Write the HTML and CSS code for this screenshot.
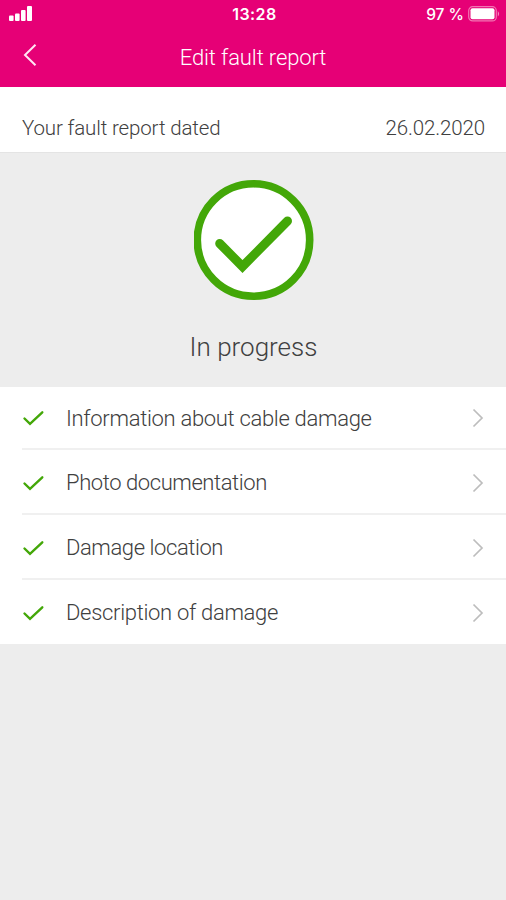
FILE: index.html
```html
<!DOCTYPE html>
<html lang="en">
<head>
<meta charset="utf-8">
<title>Edit fault report</title>
<link rel="stylesheet" href="styles.css">
</head>
<body>
<header class="header">
  <div class="status-bar">
    <svg class="signal" width="24" height="16" viewBox="0 0 24 16" fill="#fff"><rect x="0" y="9.500" width="4.600" height="5.500" rx="1"/><rect x="6" y="7.500" width="4.600" height="7.500" rx="1"/><rect x="12" y="4" width="4.600" height="11" rx="1"/><rect x="18" y="0" width="5" height="15" rx="1"/></svg>
    <span class="clock">13:28</span>
    <div class="battery"><span>97 %</span>
      <svg width="32" height="16" viewBox="0 0 32 16"><rect x=".7" y=".7" width="27.600" height="14.200" rx="4" fill="none" stroke="#f274b3" stroke-width="1.200"/><rect x="2.500" y="2.300" width="24" height="11" rx="2" fill="#fff"/><path d="M29.800 5q2.600 2.800 0 5.600z" fill="#f58abf"/></svg>
    </div>
  </div>
  <div class="nav-bar">
    <svg class="back" width="16" height="24" viewBox="0 0 16 24" fill="none" stroke="#ffe6f3" stroke-width="2"><path d="M14.500 1.700 4 12l10.500 10.300"/></svg>
    <h1 class="title">Edit fault report</h1>
  </div>
</header>
<main>
  <div class="date-row"><span class="date-label">Your fault report dated</span><time class="date">26.02.2020</time></div>
  <section class="status">
    <svg class="status-icon" width="120" height="120" viewBox="0 0 120 120"><circle cx="59.500" cy="60" r="56.200" fill="#fff" stroke="#43a708" stroke-width="7.600"/><path d="M25.700 63.500 48.500 86.500 93.500 41" fill="none" stroke="#43a708" stroke-width="9" stroke-linecap="round"/></svg>
    <p class="status-text">In progress</p>
  </section>
  <ul class="list">
    <li class="item"><svg class="check" viewBox="0 0 22 18"><path d="M2.500 9.500l5.500 5.300L20.300 3.300"/></svg><span class="label">Information about cable damage</span><svg class="chevron" viewBox="0 0 12 20"><path d="m1.500 1.500 8.500 8.500-8.500 8.500"/></svg></li>
    <li class="item"><svg class="check" viewBox="0 0 22 18"><path d="M2.500 9.500l5.500 5.300L20.300 3.300"/></svg><span class="label label-tight">Photo documentation</span><svg class="chevron" viewBox="0 0 12 20"><path d="m1.500 1.500 8.500 8.500-8.500 8.500"/></svg></li>
    <li class="item"><svg class="check" viewBox="0 0 22 18"><path d="M2.500 9.500l5.500 5.300L20.300 3.300"/></svg><span class="label label-tight">Damage location</span><svg class="chevron" viewBox="0 0 12 20"><path d="m1.500 1.500 8.500 8.500-8.500 8.500"/></svg></li>
    <li class="item"><svg class="check" viewBox="0 0 22 18"><path d="M2.500 9.500l5.500 5.300L20.300 3.300"/></svg><span class="label">Description of damage</span><svg class="chevron" viewBox="0 0 12 20"><path d="m1.500 1.500 8.500 8.500-8.500 8.500"/></svg></li>
  </ul>
</main>
</body>
</html>
```
FILE: styles.css
```css
* { box-sizing: border-box; margin: 0; padding: 0; }
body { height: 900px; background: #ededed; color: #404040; font-family: Roboto, "Liberation Sans", sans-serif; font-weight: 300; }
svg { display: block; flex: none; }
.header { height: 86.500px; background: #e60076; color: #fff; }
.status-bar { display: grid; grid-template-columns: 1fr auto 1fr; align-items: center; height: 28px; padding: 0 6px 0 9px; font-family: Inter, sans-serif; }
.clock { font-size: 16px; font-weight: 600; letter-spacing: .4px; }
.battery { display: flex; justify-content: flex-end; align-items: center; gap: 4px; font-size: 15.500px; font-weight: 500; }
.nav-bar { display: grid; grid-template-columns: 16px 1fr 16px; align-items: center; height: 54px; padding: 0 21px; }
.title { text-align: center; font-size: 22px; line-height: 26px; font-weight: 300; letter-spacing: -.12px; padding-top: 6px; }
.date-row { display: flex; justify-content: space-between; align-items: center; height: 66px; padding: 17px 21px 0 22px; background: #fff; font-size: 20.500px; border-bottom: 1px solid #e4e4e4; }
.date-label { letter-spacing: -.14px; }
.date { letter-spacing: -.12px; }
.status { display: flex; flex-direction: column; align-items: center; height: 234.500px; padding: 27.500px 0 0 1px; }
.status-text { margin-top: 31px; font-size: 26px; line-height: 32px; }
.list { list-style: none; background: #fff; }
.item { display: flex; align-items: center; height: 65px; margin-left: 22px; padding: 2px 22px 0 0; border-bottom: 2px solid #f0f0f0; font-size: 22px; }
.item:first-child { height: 63px; padding-top: 1px; }
.item:last-child { border-bottom: 0; height: 64px; padding-top: 1px; }
.check { width: 22px; height: 18px; margin-right: 22px; fill: none; stroke: #43a708; stroke-width: 2.400; stroke-linecap: round; }
.label { flex: 1; letter-spacing: -.31px; }
.label-tight { letter-spacing: -.42px; }
.chevron { width: 12px; height: 20px; fill: none; stroke: #bdbdbd; stroke-width: 1.700; }
```
